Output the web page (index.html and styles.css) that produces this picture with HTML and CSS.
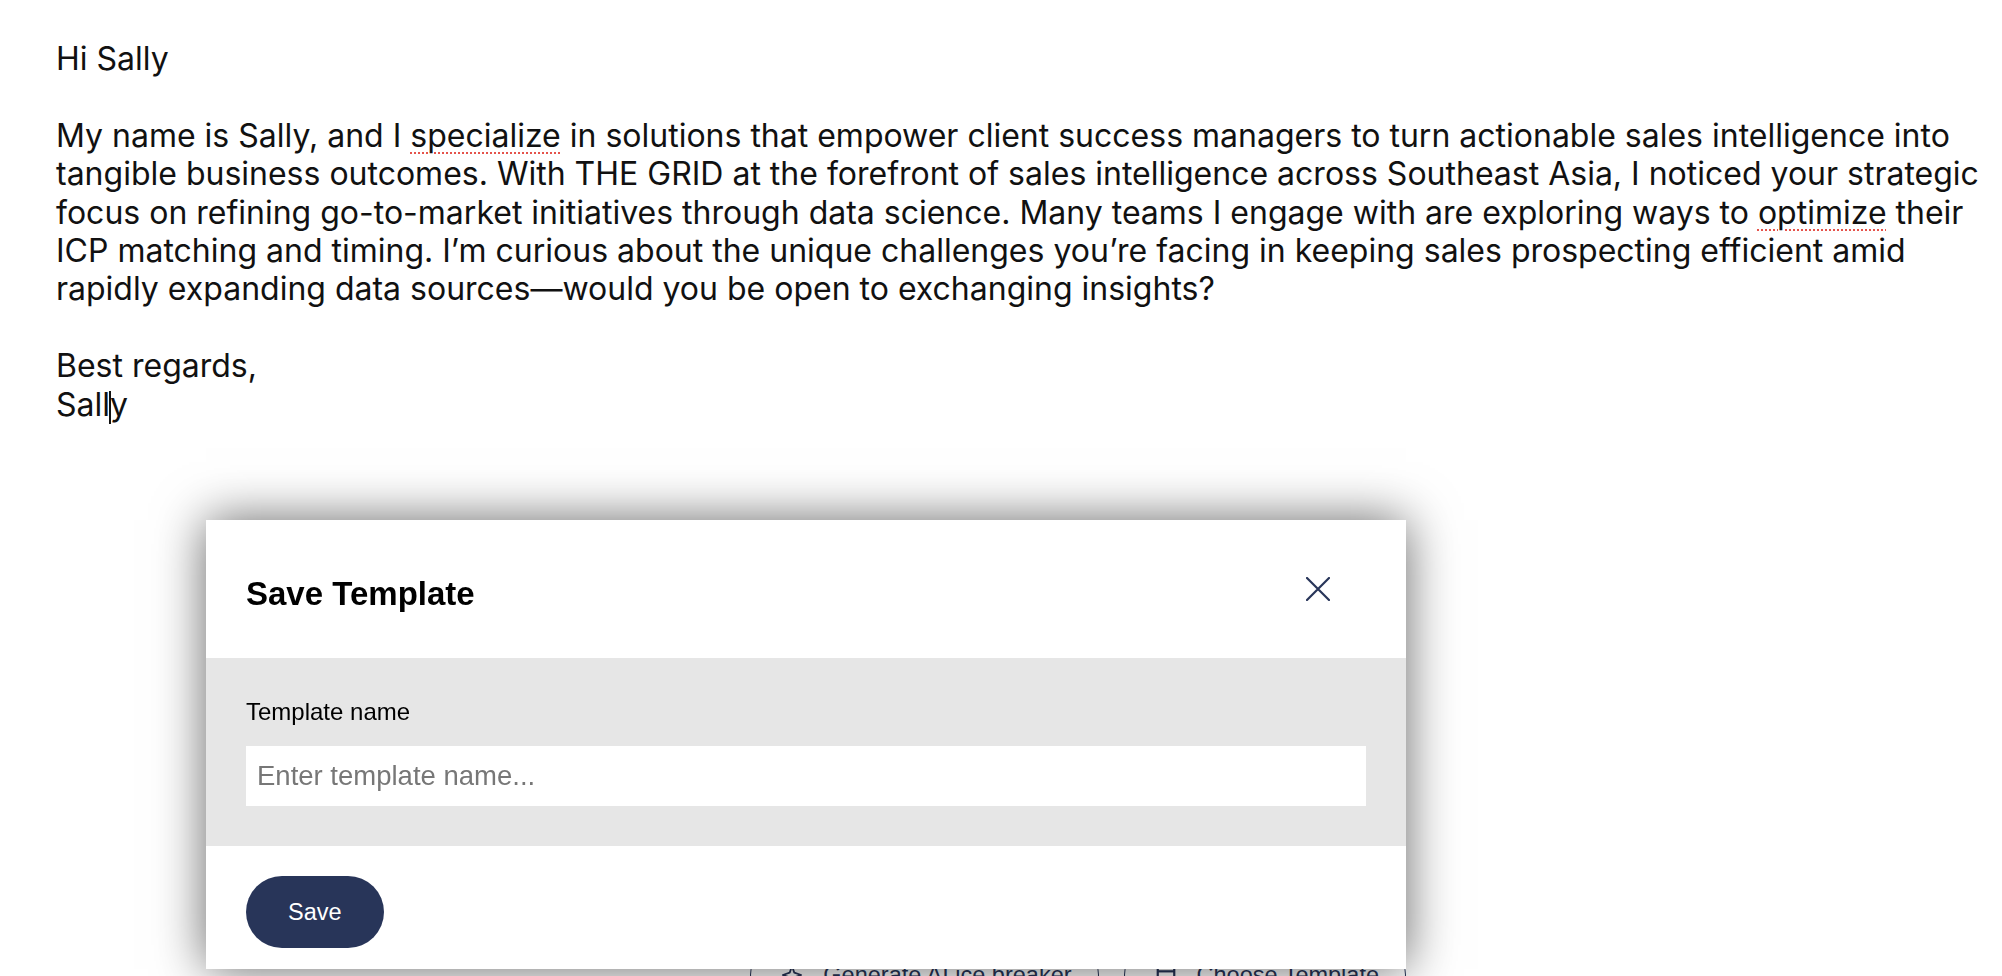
FILE: index.html
```html
<!DOCTYPE html>
<html lang="en">
<head>
  <meta charset="UTF-8">
  <meta name="viewport" content="width=device-width, initial-scale=1.0">
  <title>Email composer</title>
  <link rel="stylesheet" href="styles.css">
</head>
<body>
  <div class="composer">
    <div class="editor" contenteditable="true" spellcheck="false">
      <div>Hi Sally</div>
      <div><br></div>
      <div>My name is Sally, and I <span class="misspelled">specialize</span> in solutions that empower client success managers to turn actionable sales intelligence into tangible business outcomes. With THE GRID at the forefront of sales intelligence across Southeast Asia, I noticed your strategic focus on refining go-to-market initiatives through data science. Many teams I engage with are exploring ways to <span class="misspelled">optimize</span> their ICP matching and timing. I’m curious about the unique challenges you’re facing in keeping sales prospecting efficient amid rapidly expanding data sources—would you be open to exchanging insights?</div>
      <div><br></div>
      <div>Best regards,</div>
      <div>Sall<span class="caret"></span>y</div>
    </div>

    <div class="toolbar">
      <button class="tool-btn">
        <svg width="22" height="22" viewBox="0 0 24 24" fill="none" stroke="currentColor" stroke-width="2" stroke-linejoin="round">
          <path d="M12 2l2.5 7.5L22 12l-7.5 2.5L12 22l-2.5-7.5L2 12l7.5-2.5z"/>
        </svg>
        Generate AI ice breaker
      </button>
      <button class="tool-btn">
        <svg width="22" height="22" viewBox="0 0 24 24" fill="none" stroke="currentColor" stroke-width="2.4">
          <rect x="3" y="3" width="18" height="18"/>
          <path d="M3 8h18"/>
        </svg>
        Choose Template
      </button>
    </div>
  </div>

  <div class="modal">
    <div class="modal-header">
      <h2>Save Template</h2>
      <button class="close-btn" aria-label="Close">
        <svg width="24" height="24" viewBox="0 0 24 24" fill="none" stroke="currentColor" stroke-width="2.2" stroke-linecap="round">
          <path d="M1 1L23 23M23 1L1 23"/>
        </svg>
      </button>
    </div>
    <div class="modal-body">
      <label for="templateName">Template name</label>
      <input type="text" id="templateName" placeholder="Enter template name...">
    </div>
    <div class="modal-footer">
      <button class="save-btn">Save</button>
    </div>
  </div>
</body>
</html>
```

FILE: styles.css
```css
:root {
  --navy: #283559;
  --panel: #e6e6e6;
}
body {
  margin: 0;
  background: white;
  overflow: hidden;
}
.composer {
  display: flex;
  flex-direction: column;
}
.editor {
  height: 947px;
  box-sizing: border-box;
  padding: 40px 8px 0 56px;
  font-family: Inter, 'Noto Sans', sans-serif;
  font-size: 32px;
  line-height: 38.4px;
  color: #111;
  outline: none;
}
.misspelled {
  text-decoration: underline dotted #e5534b;
  text-decoration-thickness: 2px;
  text-underline-offset: 6px;
}
.caret {
  display: inline-block;
  width: 1.5px;
  height: 33px;
  margin: 0 -0.75px;
  background: #111;
  vertical-align: -8px;
}
.toolbar {
  display: flex;
  justify-content: flex-end;
  gap: 25px;
  width: 1406px;
}
.tool-btn {
  display: flex;
  align-items: center;
  gap: 20px;
  height: 56px;
  padding: 0 26px 0 30px;
  background: white;
  color: var(--navy);
  border: 1.6px solid var(--navy);
  border-radius: 28px;
  font-family: 'Liberation Sans', Arial, sans-serif;
  font-size: 23.5px;
}

/* modal */
.modal {
  position: fixed;
  left: 206px;
  top: 520px;
  width: 1200px;
  background: white;
  box-shadow: 0 0 48px rgba(0, 0, 0, 0.6);
  font-family: 'Liberation Sans', Arial, sans-serif;
}
.modal-header {
  height: 138px;
  box-sizing: border-box;
  padding: 0 76px 0 40px;
  display: flex;
  align-items: center;
  justify-content: space-between;
}
.modal-header h2 {
  margin: 0;
  font-size: 33px;
  font-weight: bold;
  color: #000;
  padding-top: 9px;
}
.close-btn {
  background: none;
  border: none;
  padding: 0;
  color: var(--navy);
  display: flex;
  cursor: pointer;
}
.modal-body {
  background: var(--panel);
  padding: 40px;
}
.modal-body label {
  display: block;
  font-size: 24px;
  line-height: 28px;
  margin-bottom: 20px;
  color: #000;
}
.modal-body input {
  display: block;
  width: 100%;
  height: 60px;
  box-sizing: border-box;
  padding: 0 11px;
  border: none;
  background: white;
  font-family: 'Liberation Sans', Arial, sans-serif;
  font-size: 27.5px;
  outline: none;
}
.modal-body input::placeholder {
  color: #777;
}
.modal-footer {
  padding: 30px 40px 21px;
}
.save-btn {
  height: 72px;
  padding: 0 42px;
  border: none;
  border-radius: 36px;
  background: var(--navy);
  color: white;
  font-family: 'Liberation Sans', Arial, sans-serif;
  font-size: 23.5px;
  cursor: pointer;
}
```
